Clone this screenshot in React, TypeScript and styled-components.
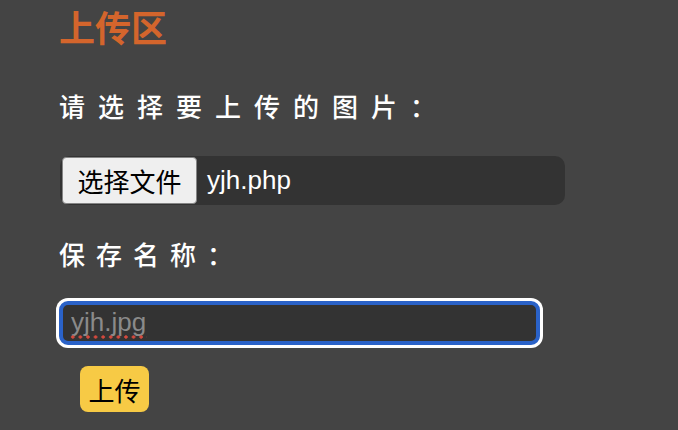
import React from "react";
import styled, { createGlobalStyle } from "styled-components";

const GlobalStyle = createGlobalStyle`
  html, body {
    margin: 0;
    padding: 0;
    background: #444444;
  }
  body {
    font-family: "Liberation Sans", "Noto Sans CJK SC", sans-serif;
  }
`;

const cjk = `"Noto Sans CJK SC", "Liberation Sans", sans-serif`;

const UploadPage = styled.div`
  display: flex;
  flex-direction: column;
  align-items: flex-start;
  width: 678px;
  height: 430px;
  box-sizing: border-box;
  padding: 5px 0 0 59px;
  background: #444444;
`;

const Title = styled.h1`
  margin: 0;
  font-family: ${cjk};
  font-size: 36px;
  line-height: 42px;
  font-weight: 700;
  color: #d4652c;
`;

const FieldLabel = styled.div<{ $spacing: number; $gap: number }>`
  margin-top: ${(p) => p.$gap}px;
  font-family: ${cjk};
  font-size: 26px;
  line-height: 30px;
  font-weight: 500;
  color: #ffffff;
  letter-spacing: ${(p) => p.$spacing}px;
`;

const FileBox = styled.label`
  display: flex;
  align-items: center;
  margin-top: 35px;
  margin-left: 1px;
  width: 505px;
  height: 49px;
  box-sizing: border-box;
  padding: 1px 2px;
  border-radius: 10px;
  background: #333333;
  cursor: pointer;
`;

const ChooseButton = styled.span`
  display: flex;
  align-items: center;
  justify-content: center;
  height: 47px;
  width: 135px;
  box-sizing: border-box;
  border: 1px solid #858585;
  border-radius: 4px;
  background: #efefef;
  color: #000000;
  font-family: ${cjk};
  font-size: 26px;
`;

const FileName = styled.span`
  margin-left: 10px;
  font-family: "Liberation Sans", sans-serif;
  font-size: 26px;
  color: #ffffff;
`;

const NameField = styled.div`
  position: relative;
  margin-top: 32px;
`;

const NameInput = styled.input`
  display: block;
  width: 481px;
  height: 44px;
  box-sizing: border-box;
  padding: 0 0 2px 8px;
  border: 4px solid #2a62c8;
  border-radius: 9px;
  box-shadow: 0 0 0 3px #ffffff;
  outline: none;
  background: #333333;
  color: #8a8a8a;
  font-family: "Liberation Sans", sans-serif;
  font-size: 26px;
`;

/* spell-check squiggle under the typed name */
const SpellMark = styled.span`
  position: absolute;
  left: 10px;
  top: 34px;
  width: 78px;
  height: 4px;
  pointer-events: none;
  background: radial-gradient(circle, #d6493d 1.4px, transparent 1.9px) 0 0 / 7.6px 4px repeat-x;
`;

const SubmitButton = styled.button`
  margin: 21px 0 0 21px;
  width: 69px;
  height: 46px;
  padding: 0;
  border: none;
  border-radius: 8px;
  background: #f7ca45;
  color: #000000;
  font-family: ${cjk};
  font-size: 26px;
  cursor: pointer;
`;

const App: React.FC = () => {
  return (
    <>
      <GlobalStyle />
      <UploadPage>
        <Title>上传区</Title>
        <FieldLabel $spacing={13} $gap={44}>
          请选择要上传的图片：
        </FieldLabel>
        <FileBox>
          <ChooseButton>选择文件</ChooseButton>
          <FileName>yjh.php</FileName>
        </FileBox>
        <FieldLabel $spacing={11} $gap={34}>
          保存名称：
        </FieldLabel>
        <NameField>
          <NameInput defaultValue="yjh.jpg" spellCheck={false} />
          <SpellMark />
        </NameField>
        <SubmitButton>上传</SubmitButton>
      </UploadPage>
    </>
  );
};

export default App;
